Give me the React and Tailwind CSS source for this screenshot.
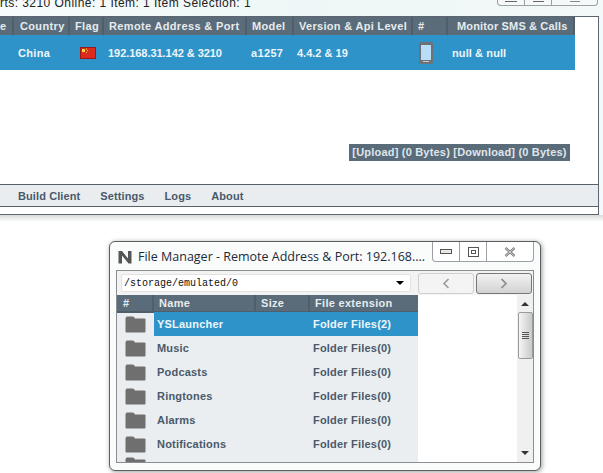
import React from 'react'

const font = "font-['Liberation_Sans',Arial,sans-serif]"

const columns = [
  { label: 'e', cls: 'pl-0 tracking-[0.35px]' },
  { label: 'Country', cls: 'pl-[6px] tracking-[0.35px]' },
  { label: 'Flag', cls: 'pl-[5px] tracking-[0.35px]' },
  { label: 'Remote Address & Port', cls: 'pl-[5px] tracking-[0.35px]' },
  { label: 'Model', cls: 'pl-[5px] tracking-[0.35px]' },
  { label: 'Version & Api Level', cls: 'pl-[5px] tracking-[0.3px]' },
  { label: '#', cls: 'pl-[5px] tracking-[0.35px]' },
  { label: 'Monitor SMS & Calls', cls: 'pl-[9px] tracking-[0.15px]' },
]

const folders = [
  { name: 'YSLauncher', ext: 'Folder Files(2)', active: true },
  { name: 'Music', ext: 'Folder Files(0)' },
  { name: 'Podcasts', ext: 'Folder Files(0)' },
  { name: 'Ringtones', ext: 'Folder Files(0)' },
  { name: 'Alarms', ext: 'Folder Files(0)' },
  { name: 'Notifications', ext: 'Folder Files(0)' },
]

function FolderIcon() {
  return (
    <svg width="21" height="17" viewBox="0 0 21 17">
      <path d="M1 1.5 Q1 0.5 2 0.5 H8 Q9 0.5 10 2.5 H19.5 Q20.5 2.5 20.5 3.5 V15.5 Q20.5 16.5 19.5 16.5 H1.5 Q0.5 16.5 0.5 15.5 V2 Z" fill="#6f6f6f" />
    </svg>
  )
}

function Flag() {
  return (
    <svg width="16" height="12" viewBox="0 0 16 12">
      <rect x="0.5" y="0.5" width="15" height="11" fill="#dc2a1f" stroke="#a31515" />
      <rect x="2" y="2" width="3" height="3" fill="#f5d33a" />
      <rect x="6" y="1.5" width="1" height="1" fill="#f5d33a" />
      <rect x="7" y="3" width="1" height="1" fill="#f5d33a" />
      <rect x="6" y="5" width="1" height="1" fill="#f5d33a" />
    </svg>
  )
}

function Phone() {
  return (
    <svg width="14" height="22" viewBox="0 0 14 22">
      <rect width="14" height="22" rx="2" fill="#6e7276" />
      <rect x="2" y="3" width="10" height="15" fill="#b9dcf7" />
      <rect x="4" y="19" width="6" height="1" fill="#c9cdd0" />
    </svg>
  )
}

function NLogo() {
  return (
    <svg width="14" height="14" viewBox="0 0 14 14">
      <path d="M0.5 1 H4 L10 8.5 V1 H13.5 V13.5 H10.5 L4 5.5 V13.5 H0.5 Z" fill="#555" />
    </svg>
  )
}

function CaptionIcons() {
  return (
    <>
      <div className="flex w-[27px] items-center justify-center border-r border-[#9aa0a5]">
        <div className="h-[5px] w-[12px] border border-[#555] bg-[#e8e8e8]" />
      </div>
      <div className="flex w-[27px] items-center justify-center border-r border-[#9aa0a5]">
        <div className="flex h-[10px] w-[11px] items-center justify-center border border-[#555]">
          <div className="h-[4px] w-[5px] border border-[#555]" />
        </div>
      </div>
      <div className="flex flex-1 items-center justify-center">
        <svg width="12" height="10" viewBox="0 0 12 10">
          <path d="M1.5 1 L10.5 9 M10.5 1 L1.5 9" stroke="#777" strokeWidth="2.4" fill="none" />
          <path d="M1.5 1 L10.5 9 M10.5 1 L1.5 9" stroke="#eee" strokeWidth="0.8" fill="none" />
        </svg>
      </div>
    </>
  )
}

function MainWindow() {
  return (
    <div className={`absolute left-0 top-0 flex h-[222px] w-[603px] flex-col bg-gradient-to-r from-[#f7fbfb] via-[#eef7f7] to-[#f3f8f8] ${font}`}>
      <div className="flex h-[16px] shrink-0 justify-between">
        <div className="mt-[-5px] whitespace-nowrap text-[12px] leading-[16px] tracking-[0.45px] text-[#222]">
          rts: 3210 Online: 1 Item: 1 Item Selection: 1
        </div>
        <div className="mr-[5px] flex h-[6px] w-[101px] rounded-b-[4px] border border-t-0 border-[#9aa0a5] bg-[#f5f9f9]">
          <div className="flex w-[27px] justify-center border-r border-[#9aa0a5]">
            <div className="h-[2px] w-[12px] border-b border-[#666]" />
          </div>
          <div className="flex w-[27px] justify-center border-r border-[#9aa0a5]">
            <div className="h-[2px] w-[11px] border-b border-[#666]" />
          </div>
          <div className="flex flex-1 justify-center">
            <div className="h-[2px] w-[10px] border-b border-[#888]" />
          </div>
        </div>
      </div>

      <div className="mr-[4px] flex h-[199px] shrink-0 flex-col border border-l-0 border-[#5d6670] bg-white">
        <div className="grid h-[18px] w-[575px] shrink-0 grid-cols-[14px_56px_34px_143px_47px_119px_35px_127px] bg-[#5a6b7a]">
          {columns.map((col) => (
            <div key={col.label} className={`border-r-2 border-b-2 border-[#4f5e6b] text-[11px] font-bold leading-[18px] whitespace-nowrap text-[#e6ebee] ${col.cls}`}>
              {col.label}
            </div>
          ))}
        </div>
        <div className="grid h-[35px] w-[575px] shrink-0 grid-cols-[14px_56px_34px_143px_47px_119px_35px_127px] items-center bg-[#2e93c8] text-[11px] font-bold tracking-[0.35px] text-[#eef6fb]">
          <div />
          <div className="pl-[4px] pt-[2px]">China</div>
          <div className="pl-[10px]"><Flag /></div>
          <div className="pl-[4px] pt-[2px] tracking-[-0.05px] whitespace-nowrap">192.168.31.142 &amp; 3210</div>
          <div className="pl-[4px] pt-[2px]">a1257</div>
          <div className="pl-[3px] pt-[2px] tracking-normal">4.4.2 &amp; 19</div>
          <div className="pl-[6px]"><Phone /></div>
          <div className="pl-[4px] pt-[2px] tracking-[0.1px]">null &amp; null</div>
        </div>

        <div className="flex h-[114px] shrink-0 items-end justify-end pb-[23px] pr-[28px]">
          <div className="flex h-[17px] w-[221px] items-center justify-center bg-[#5a6b7a] text-[11px] font-bold tracking-[0.2px] whitespace-nowrap text-[#dfe6ea]">
            [Upload] (0 Bytes) [Download] (0 Bytes)
          </div>
        </div>

        <div className="flex h-[23px] shrink-0 items-center gap-[20px] border-y border-[#56616a] bg-[#e9edf0] pl-[18px] pt-[1px] text-[11px] font-bold tracking-[0.1px] text-[#4a5a6a]">
          <span>Build Client</span>
          <span>Settings</span>
          <span>Logs</span>
          <span>About</span>
        </div>
        <div className="flex-1" />
      </div>
      <div className="h-[7px] bg-gradient-to-b from-[#d8dadb] to-white" />
    </div>
  )
}

function FileManager() {
  return (
    <div className={`absolute left-[109px] top-[241px] flex h-[230px] w-[432px] flex-col rounded-[6px] border border-[#5b5f63] bg-[#fafcfc] px-[6px] shadow-[1px_1px_5px_rgba(0,0,0,0.4)] ${font}`}>
      <div className="flex h-[28px] shrink-0 justify-between">
        <div className="flex items-center gap-[6px] pl-[2px] pt-[1px]">
          <NLogo />
          <span className="font-['Open_Sans',sans-serif] text-[12.5px] leading-[20px] whitespace-nowrap text-[#1a2a3a]">
            File Manager - Remote Address &amp; Port: 192.168....
          </span>
        </div>
        <div className="flex h-[20px] w-[102px] rounded-b-[4px] border border-t-0 border-[#9aa0a5] bg-white">
          <CaptionIcons />
        </div>
      </div>

      <div className="flex h-[193px] shrink-0 flex-col border border-[#8a8e92] bg-white">
        <div className="flex h-[24px] shrink-0 items-center bg-[#f3f3f3] pl-[4px]">
          <div className="flex h-[18px] w-[290px] items-center justify-between rounded-[2px] border border-[#e2e2e2] bg-white pl-[2px] pr-[6px]">
            <span className="font-['Liberation_Mono',monospace] text-[10px] text-[#111]">/storage/emulated/0</span>
            <div className="h-0 w-0 border-x-[4px] border-t-[4px] border-x-transparent border-t-black" />
          </div>
          <div className="ml-[7px] flex h-[21px] w-[56px] items-center justify-center rounded-[3px] border border-[#cfcfcf] bg-[#f4f4f4]">
            <svg width="8" height="11" viewBox="0 0 8 11"><path d="M6.5 1 L2 5.5 L6.5 10" stroke="#999" strokeWidth="1.6" fill="none" /></svg>
          </div>
          <div className="ml-[2px] flex h-[21px] w-[56px] items-center justify-center rounded-[3px] border border-[#777] bg-gradient-to-b from-[#f2f2f2] to-[#d2d2d2]">
            <svg width="8" height="11" viewBox="0 0 8 11"><path d="M1.5 1 L6 5.5 L1.5 10" stroke="#888" strokeWidth="1.6" fill="none" /></svg>
          </div>
        </div>

        <div className="flex min-h-0 flex-1">
          <div className="flex w-[301px] shrink-0 flex-col overflow-hidden bg-[#eaeef1]">
            <div className="grid h-[17px] shrink-0 grid-cols-[37px_102px_54px_108px] bg-[#5a6b7a] text-[11px] font-bold leading-[16px] tracking-[0.3px] text-[#e6ebee]">
              <div className="border-r-2 border-b-2 border-[#4f5e6b] pl-[6px]">#</div>
              <div className="border-r-2 border-b-2 border-[#4f5e6b] pl-[5px]">Name</div>
              <div className="border-r-2 border-b-2 border-[#4f5e6b] pl-[5px]">Size</div>
              <div className="border-b-2 border-[#4f5e6b] pl-[5px]">File extension</div>
            </div>
            {folders.map((f) => (
              <div key={f.name} className="grid h-[24px] shrink-0 grid-cols-[37px_102px_54px_108px] items-center text-[11px] font-bold tracking-[0.2px] text-[#4a5a6a]">
                <div className="pl-[8px]"><FolderIcon /></div>
                <div className={f.active ? 'col-span-3 grid h-full grid-cols-[156px_108px] items-center bg-[#2e93c8] pl-[3px] text-[#eef6fb]' : 'col-span-3 grid h-full grid-cols-[156px_108px] items-center pl-[3px]'}>
                  <span>{f.name}</span>
                  <span>{f.ext}</span>
                </div>
              </div>
            ))}
            <div className="pl-[8px] pt-[1px]"><FolderIcon /></div>
          </div>
          <div className="flex-1 bg-white" />
          <div className="flex w-[16px] shrink-0 flex-col items-center bg-[#f0f0f0]">
            <div className="mt-[7px] h-0 w-0 border-x-[4px] border-b-[4px] border-x-transparent border-b-[#333]" />
            <div className="mt-[6px] flex h-[47px] w-[15px] flex-col items-center justify-center gap-[1px] rounded-[2px] border border-[#9a9a9a] bg-gradient-to-r from-[#f5f5f5] to-[#c9c9c9]">
              <div className="h-px w-[7px] bg-[#555]" />
              <div className="h-px w-[7px] bg-[#555]" />
              <div className="h-px w-[7px] bg-[#555]" />
              <div className="h-px w-[7px] bg-[#555]" />
            </div>
            <div className="mb-[7px] mt-auto h-0 w-0 border-x-[4px] border-t-[4px] border-x-transparent border-t-[#333]" />
          </div>
        </div>
      </div>
    </div>
  )
}

export default function App() {
  return (
    <div className="relative h-[473px] w-[603px] overflow-hidden bg-white">
      <MainWindow />
      <FileManager />
    </div>
  )
}
